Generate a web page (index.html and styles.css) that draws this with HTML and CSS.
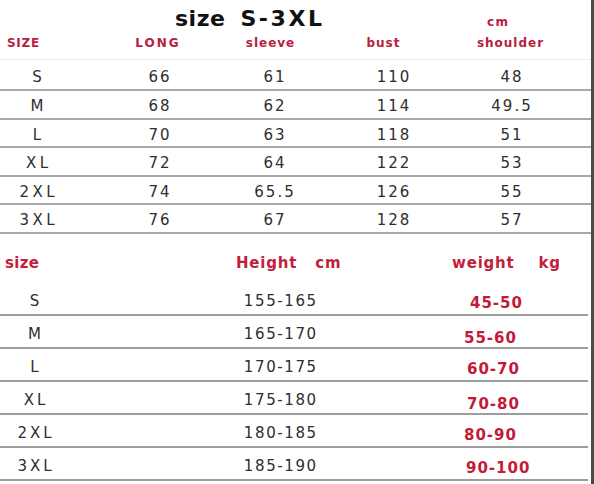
FILE: index.html
```html
<!DOCTYPE html>
<html lang="en">
<head>
<meta charset="utf-8">
<title>Size chart</title>
<link rel="stylesheet" href="styles.css">
</head>
<body>
<div class="sheet">
  <section class="chart-top">
    <div class="title-row">
      <h1 class="title"><span class="t-word">size</span><span class="t-range">S-3XL</span></h1>
      <span class="unit">cm</span>
    </div>
    <div class="head-row">
      <span class="h h-size">SIZE</span>
      <span class="h h-long">LONG</span>
      <span class="h">sleeve</span>
      <span class="h">bust</span>
      <span class="h">shoulder</span>
    </div>
    <div class="row row-first"><span class="sz">S</span><span class="n">66</span><span class="n">61</span><span class="n">110</span><span class="n">48</span></div>
    <div class="row"><span class="sz">M</span><span class="n">68</span><span class="n">62</span><span class="n">114</span><span class="n">49.5</span></div>
    <div class="row"><span class="sz">L</span><span class="n">70</span><span class="n">63</span><span class="n">118</span><span class="n">51</span></div>
    <div class="row"><span class="sz">XL</span><span class="n">72</span><span class="n">64</span><span class="n">122</span><span class="n">53</span></div>
    <div class="row"><span class="sz">2XL</span><span class="n">74</span><span class="n">65.5</span><span class="n">126</span><span class="n">55</span></div>
    <div class="row"><span class="sz">3XL</span><span class="n">76</span><span class="n">67</span><span class="n">128</span><span class="n">57</span></div>
  </section>
  <section class="chart-bottom">
    <div class="b-head">
      <span class="bh bh-size">size</span>
      <span class="bh bh-height"><span>Height</span><span>cm</span></span>
      <span class="bh bh-weight"><span>weight</span><span>kg</span></span>
    </div>
    <div class="b-row"><span class="bsz">S</span><span class="bht">155-165</span><span class="bw nudge-6">45-50</span></div>
    <div class="b-row"><span class="bsz">M</span><span class="bht">165-170</span><span class="bw low">55-60</span></div>
    <div class="b-row"><span class="bsz">L</span><span class="bht">170-175</span><span class="bw nudge-3">60-70</span></div>
    <div class="b-row"><span class="bsz">XL</span><span class="bht">175-180</span><span class="bw nudge-3 low">70-80</span></div>
    <div class="b-row"><span class="bsz">2XL</span><span class="bht">180-185</span><span class="bw">80-90</span></div>
    <div class="b-row"><span class="bsz">3XL</span><span class="bht">185-190</span><span class="bw nudge-2">90-100</span></div>
  </section>
</div>
</body>
</html>
```

FILE: styles.css
```css
* { box-sizing: border-box; margin: 0; padding: 0; }
html, body { background: #fff; }
body {
  width: 594px;
  height: 484px;
  overflow: hidden;
  font-family: "DejaVu Sans", "Liberation Sans", sans-serif;
  color: #333;
}
.sheet {
  width: 594px;
  height: 484px;
  border-right: 3px solid #4a4a4a;
  display: flex;
  flex-direction: column;
}

/* ---------- top chart ---------- */
.title-row {
  height: 32px;
  padding-top: 6px;
  display: grid;
  grid-template-columns: 487px auto;
  align-items: start;
}
.title {
  padding-left: 175px;
  display: flex;
  gap: 15px;
  font-size: 22px;
  line-height: 26px;
  font-weight: bold;
  color: #111;
}
.t-word { letter-spacing: 0.5px; }
.t-range { letter-spacing: 2.6px; }
.unit {
  margin-top: 3px;
  font-size: 12px;
  line-height: 26px;
  font-weight: bold;
  letter-spacing: 1.5px;
  color: #b8203f;
}
.head-row {
  height: 28px;
  padding-bottom: 5px;
  border-bottom: 1px solid #ececec;
  display: grid;
  grid-template-columns: 100px 114px 112px 114px 140px;
  align-items: center;
}
.h {
  text-align: center;
  padding-left: 1px;
  font-size: 12px;
  font-weight: bold;
  letter-spacing: 1px;
  color: #b8203f;
}
.h-size { text-align: left; padding-left: 7px; letter-spacing: 0.7px; }
.h-long { letter-spacing: 2px; padding-left: 2px; }

.row {
  height: 28.5px;
  padding-top: 4px;
  border-bottom: 2px solid #a8a8a8;
  display: grid;
  grid-template-columns: 74px 170px 60px 178px 58px;
  align-items: center;
  font-size: 15px;
  color: #2e2e2e;
}
.row-first { height: 31px; padding-top: 5px; }
.row .n { text-align: center; letter-spacing: 2px; padding-left: 2px; }
.row .sz { text-align: center; letter-spacing: 3.5px; padding-left: 3.5px; }

/* ---------- bottom chart ---------- */
.chart-bottom { width: 588px; }
.b-head {
  height: 49.5px;
  padding-top: 19px;
  display: grid;
  grid-template-columns: 236px 216px 1fr;
  align-items: start;
}
.bh {
  font-size: 15px;
  line-height: 20px;
  font-weight: bold;
  letter-spacing: 0.8px;
  color: #c21e3d;
}
.bh-size { padding-left: 5px; letter-spacing: 0.3px; }
.bh-height { display: flex; gap: 18px; }
.bh-weight { display: flex; gap: 24px; }

.b-row {
  height: 33px;
  padding-top: 4px;
  border-bottom: 2px solid #9d9d9d;
  display: grid;
  grid-template-columns: 69px 397px 1fr;
  align-items: center;
  font-size: 15px;
  color: #2e2e2e;
}
.bsz { text-align: center; letter-spacing: 3px; padding-left: 3px; }
.bht { text-align: center; letter-spacing: 1.6px; padding-left: 26.6px; }
.bw {
  margin-left: -2px;
  padding-top: 4px;
  font-weight: bold;
  letter-spacing: 1px;
  color: #c41a38;
}
.bw.low { padding-top: 8px; }
.nudge-2 { padding-left: 2px; }
.nudge-3 { padding-left: 3px; }
.nudge-6 { padding-left: 6px; }
```
